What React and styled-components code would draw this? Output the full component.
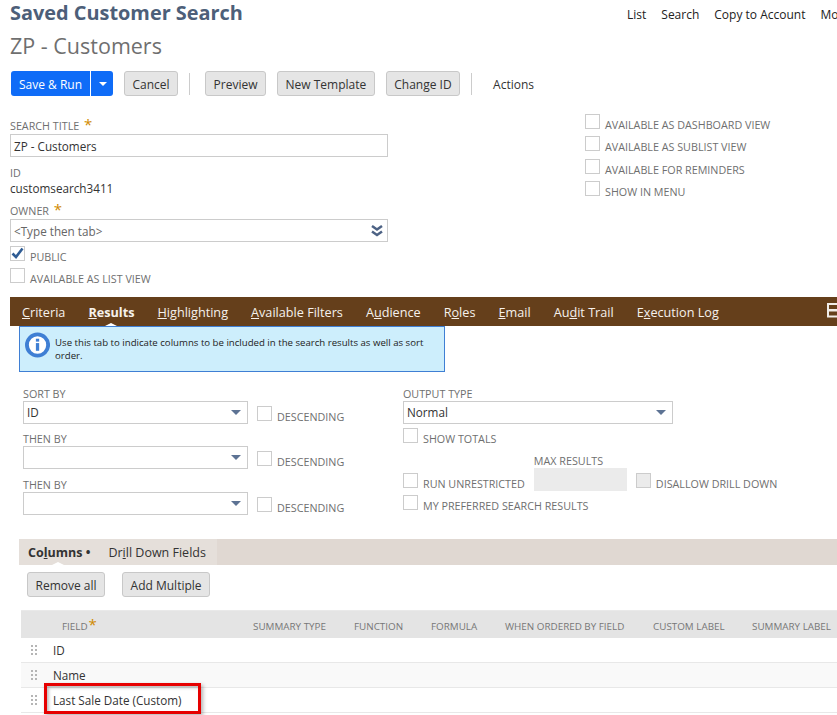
import React from "react";
import styled, { createGlobalStyle } from "styled-components";

const tabs = [
  ["C", "riteria"],
  ["R", "esults", true],
  ["H", "ighlighting"],
  ["A", "vailable Filters"],
  ["A", "udience", false, "u"],
  ["R", "oles", false, "o"],
  ["E", "mail"],
  ["A", "udit Trail", false, "d"],
  ["E", "xecution Log", false, "x"],
];

const columns = [
  ["SUMMARY TYPE", 101],
  ["FUNCTION", 77],
  ["FORMULA", 74],
  ["WHEN ORDERED BY FIELD", 148],
  ["CUSTOM LABEL", 99],
  ["SUMMARY LABEL", 100],
];

const rows = ["ID", "Name", "Last Sale Date (Custom)"];

function TabLabel({ first, rest, mark }) {
  if (!mark) {
    return (
      <>
        <u>{first}</u>
        {rest}
      </>
    );
  }
  const at = rest.indexOf(mark);
  return (
    <>
      {first}
      {rest.slice(0, at)}
      <u>{mark}</u>
      {rest.slice(at + 1)}
    </>
  );
}

function Check({ checked, disabled, label }) {
  return (
    <CheckRow>
      <CheckBox $disabled={disabled}>
        {checked && (
          <svg width="15" height="15" viewBox="0 0 15 15">
            <path d="M2.5 7.5 L6 11 L12.5 2.5" fill="none" stroke="#2f5c94" strokeWidth="2.6" />
          </svg>
        )}
      </CheckBox>
      <Label>{label}</Label>
    </CheckRow>
  );
}

function SelectField({ label, value, width }) {
  return (
    <Field>
      <Label>{label}</Label>
      <Select $width={width}>
        {value}
        <Caret />
      </Select>
    </Field>
  );
}

function SortRow({ label, value }) {
  return (
    <SortLine>
      <SelectField label={label} value={value} width={225} />
      <Check label="DESCENDING" />
    </SortLine>
  );
}

function Grip() {
  return (
    <svg width="6" height="10" viewBox="0 0 6 10">
      <g fill="#b5b5b5">
        <rect x="0" y="0" width="2" height="2" />
        <rect x="4" y="0" width="2" height="2" />
        <rect x="0" y="4" width="2" height="2" />
        <rect x="4" y="4" width="2" height="2" />
        <rect x="0" y="8" width="2" height="2" />
        <rect x="4" y="8" width="2" height="2" />
      </g>
    </svg>
  );
}

export default function App() {
  return (
    <>
      <GlobalStyle />
      <Page>
        <TitleRow>
          <Title>Saved Customer Search</Title>
          <TopNav>
            <span>List</span>
            <span>Search</span>
            <span>Copy to Account</span>
            <span>More</span>
          </TopNav>
        </TitleRow>
        <Subtitle>ZP - Customers</Subtitle>

        <Toolbar>
          <SplitButton>
            <SplitMain>Save &amp; Run</SplitMain>
            <SplitArrow />
          </SplitButton>
          <GrayButton>Cancel</GrayButton>
          <ToolbarDivider />
          <GrayButton>Preview</GrayButton>
          <GrayButton>New Template</GrayButton>
          <GrayButton>Change ID</GrayButton>
          <ToolbarDivider />
          <ActionsLink>Actions</ActionsLink>
        </Toolbar>

        <MainForm>
          <LeftColumn>
            <Field>
              <RequiredLabel>
                SEARCH TITLE <Star>*</Star>
              </RequiredLabel>
              <TextInput>ZP - Customers</TextInput>
            </Field>
            <IdField>
              <Label>ID</Label>
              <IdValue>customsearch3411</IdValue>
            </IdField>
            <Field>
              <RequiredLabel>
                OWNER <Star>*</Star>
              </RequiredLabel>
              <TextInput $muted>
                &lt;Type then tab&gt;
                <svg width="12" height="12" viewBox="0 0 12 12">
                  <path d="M1 1 L6 4.5 L11 1 M1 6.5 L6 10 L11 6.5" fill="none" stroke="#4d6284" strokeWidth="2.5" />
                </svg>
              </TextInput>
            </Field>
            <CheckStack>
              <Check checked label="PUBLIC" />
              <Check label="AVAILABLE AS LIST VIEW" />
            </CheckStack>
          </LeftColumn>
          <RightColumn>
            <Check label="AVAILABLE AS DASHBOARD VIEW" />
            <Check label="AVAILABLE AS SUBLIST VIEW" />
            <Check label="AVAILABLE FOR REMINDERS" />
            <Check label="SHOW IN MENU" />
          </RightColumn>
        </MainForm>

        <TabBar>
          {tabs.map(([first, rest, active, mark]) => (
            <Tab key={first + rest} $active={active}>
              <TabLabel first={first} rest={rest} mark={mark} />
            </Tab>
          ))}
          <TabMenu>
            <svg width="10" height="15" viewBox="0 0 10 15">
              <g fill="none" stroke="#f0ece8" strokeWidth="2">
                <rect x="1" y="1" width="14" height="6" />
                <rect x="1" y="7.5" width="14" height="6" />
              </g>
            </svg>
          </TabMenu>
        </TabBar>

        <InfoBox>
          <svg width="26" height="26" viewBox="0 0 26 26">
            <circle cx="13" cy="13" r="11" fill="#fff" stroke="#3f7fd4" strokeWidth="4" />
            <rect x="11.3" y="11" width="3.4" height="8" fill="#3f7fd4" />
            <rect x="11.3" y="6.5" width="3.4" height="3" fill="#3f7fd4" />
          </svg>
          <InfoText>
            Use this tab to indicate columns to be included in the search results as well as sort order.
          </InfoText>
        </InfoBox>

        <OptionsGrid>
          <SortColumn>
            <SortRow label="SORT BY" value="ID" />
            <SortRow label="THEN BY" />
            <SortRow label="THEN BY" />
          </SortColumn>
          <OutputColumn>
            <SelectField label="OUTPUT TYPE" value="Normal" width={270} />
            <ShowTotals>
              <Check label="SHOW TOTALS" />
            </ShowTotals>
            <RunLine>
              <Check label="RUN UNRESTRICTED" />
              <MaxResults>
                <Label>MAX RESULTS</Label>
                <MaxInput />
              </MaxResults>
              <Check disabled label="DISALLOW DRILL DOWN" />
            </RunLine>
            <Check label="MY PREFERRED SEARCH RESULTS" />
          </OutputColumn>
        </OptionsGrid>

        <SubTabs>
          <SubTabGroup>
            <SubTab $active>
              Co<u>l</u>umns <Dot>•</Dot>
            </SubTab>
            <SubTab>
              Dr<u>i</u>ll Down Fields
            </SubTab>
          </SubTabGroup>
        </SubTabs>

        <ListButtons>
          <GrayButton>Remove all</GrayButton>
          <GrayButton>Add Multiple</GrayButton>
        </ListButtons>

        <ColumnTable>
          <HeadRow>
            <FieldHead>
              FIELD<HeadStar>*</HeadStar>
            </FieldHead>
            {columns.map(([name, width]) => (
              <HeadCell key={name} $width={width}>
                {name}
              </HeadCell>
            ))}
          </HeadRow>
          {rows.map((name, i) => (
            <Row key={name} $odd={i % 2 === 1}>
              <GripCell>
                <Grip />
              </GripCell>
              {name}
              {i === 2 && <Highlight />}
            </Row>
          ))}
        </ColumnTable>
      </Page>
    </>
  );
}

const GlobalStyle = createGlobalStyle`
  html, body {
    margin: 0;
    padding: 0;
    background: #fff;
    overflow: hidden;
  }
  body {
    font-family: "Open Sans", "Liberation Sans", sans-serif;
    color: #333;
  }
  * {
    box-sizing: border-box;
  }
`;

const Page = styled.div`
  width: 837px;
  height: 715px;
  overflow: hidden;
`;

const TitleRow = styled.div`
  display: flex;
  justify-content: space-between;
  height: 26px;
  padding-left: 10px;
`;

const Title = styled.h1`
  margin: 0;
  font-size: 19.9px;
  line-height: 26px;
  font-weight: 700;
  color: #4d5f79;
  white-space: nowrap;
`;

const TopNav = styled.nav`
  display: flex;
  gap: 15px;
  width: 210px;
  flex: none;
  font-size: 12px;
  line-height: 16px;
  padding-top: 7px;
  color: #222;
  white-space: nowrap;
`;

const Subtitle = styled.h2`
  margin: 0;
  padding: 5px 0 0 10px;
  height: 45px;
  font-size: 21.5px;
  line-height: 30px;
  font-weight: 400;
  color: #6f6f6f;
`;

const Toolbar = styled.div`
  display: flex;
  align-items: center;
  height: 25px;
  padding-left: 11px;
  gap: 11px;
`;

const GrayButton = styled.button`
  height: 25px;
  padding: 1px 7.5px 0;
  border: 1px solid #c8c8c8;
  border-radius: 3px;
  background: #e5e5e5;
  color: #333;
  font-family: inherit;
  font-size: 12px;
  font-weight: 500;
  white-space: nowrap;
`;

const SplitButton = styled.div`
  display: flex;
  height: 25px;
`;

const SplitMain = styled.button`
  width: 79px;
  border: none;
  border-radius: 3px 0 0 3px;
  background: #0f6cf7;
  color: #fff;
  font-family: inherit;
  font-size: 12px;
  font-weight: 500;
  padding: 1px 0 0;
`;

const SplitArrow = styled.span`
  position: relative;
  width: 22px;
  margin-left: 1px;
  border-radius: 0 3px 3px 0;
  background: #0f6cf7;

  &::after {
    content: "";
    position: absolute;
    left: 8px;
    top: 11px;
    border-style: solid;
    border-width: 4px 4px 0;
    border-color: #fff transparent transparent;
  }
`;

const ToolbarDivider = styled.span`
  width: 1px;
  height: 22px;
  margin: 0 4px 0 0;
  background: #ccc;
`;

const ActionsLink = styled.span`
  margin-left: 6px;
  padding-top: 1px;
  font-size: 12px;
  font-weight: 500;
  color: #333;
`;

const MainForm = styled.div`
  display: flex;
  height: 201px;
  padding: 18px 0 0 10px;
`;

const LeftColumn = styled.div`
  width: 378px;
  padding-top: 5px;
`;

const RightColumn = styled.div`
  display: flex;
  flex-direction: column;
  gap: 5.4px;
  margin-left: 197px;
`;

const Field = styled.div`
  display: flex;
  flex-direction: column;
`;

const Label = styled.span`
  font-size: 10.75px;
  line-height: 14px;
  color: #6f6f6f;
  white-space: nowrap;
`;

const RequiredLabel = styled(Label)`
  height: 15px;
`;

const Star = styled.span`
  color: #d08a00;
  font-size: 15px;
  font-weight: 400;
  line-height: 10px;
  vertical-align: top;
  margin-left: 2px;
`;

const TextInput = styled.div`
  display: flex;
  align-items: center;
  justify-content: space-between;
  height: 23px;
  padding: 0 4px 0 3px;
  border: 1px solid #ccc;
  font-size: 11.7px;
  color: ${(p) => (p.$muted ? "#666" : "#333")};
`;

const IdField = styled(Field)`
  margin: 9px 0 8px;
`;

const IdValue = styled.span`
  font-size: 11.7px;
  line-height: 16px;
  color: #333;
`;

const CheckStack = styled.div`
  display: flex;
  flex-direction: column;
  gap: 5px;
  margin-top: 4px;
`;

const CheckRow = styled.label`
  display: flex;
  align-items: flex-start;
  gap: 5px;
  height: 17px;
`;

const CheckBox = styled.span`
  flex: none;
  width: 15px;
  height: 15px;
  border: 1px solid #ccc;
  background: ${(p) => (p.$disabled ? "#ebebeb" : "#fff")};
  line-height: 0;

  & + span {
    margin-top: 4px;
  }

  svg {
    margin: -1px;
  }
`;

const TabBar = styled.div`
  display: flex;
  align-items: flex-end;
  height: 29px;
  margin-left: 10px;
  padding-left: 12px;
  gap: 23px;
  background: #653f1b;
  position: relative;
`;

const Tab = styled.span`
  position: relative;
  padding-top: 2px;
  font-size: 12.67px;
  line-height: 27px;
  font-weight: ${(p) => (p.$active ? 700 : 400)};
  color: #f6f1ec;
  white-space: nowrap;

  &::after {
    content: "";
    display: ${(p) => (p.$active ? "block" : "none")};
    position: absolute;
    left: 50%;
    bottom: 0;
    margin-left: -6px;
    border-style: solid;
    border-width: 0 6px 3px;
    border-color: transparent transparent #fff;
  }
`;

const TabMenu = styled.span`
  position: absolute;
  right: 0;
  top: 6px;
  line-height: 0;
`;

const InfoBox = styled.div`
  display: flex;
  align-items: flex-start;
  gap: 5px;
  width: 426px;
  height: 46px;
  margin-left: 19px;
  padding: 5px 5px 0 5px;
  background: #cdeefc;
  border: 1px solid #3f7fd4;
`;

const InfoText = styled.p`
  margin: 4px 0 0;
  font-size: 9.65px;
  line-height: 13px;
  color: #222;
`;

const OptionsGrid = styled.div`
  display: flex;
  height: 167px;
  padding: 15px 0 0 23px;
`;

const SortColumn = styled.div`
  display: flex;
  flex-direction: column;
  gap: 8.3px;
  width: 380px;
`;

const SortLine = styled.div`
  display: flex;
  align-items: flex-end;
  gap: 9px;

  > label {
    margin-bottom: 1px;
  }
`;

const Select = styled.div`
  position: relative;
  display: flex;
  align-items: center;
  width: ${(p) => p.$width}px;
  height: 23px;
  padding: 0 0 2px 3px;
  border: 1px solid #ccc;
  font-size: 11.7px;
  color: #333;
`;

const Caret = styled.span`
  position: absolute;
  right: 6px;
  top: 8px;
  border-style: solid;
  border-width: 5px 5.5px 0;
  border-color: #5d7394 transparent transparent;
`;

const OutputColumn = styled.div`
  display: flex;
  flex-direction: column;
`;

const ShowTotals = styled.div`
  margin-top: 4px;
  height: 23px;
`;

const RunLine = styled.div`
  display: flex;
  align-items: flex-end;
  height: 40px;
  margin-bottom: 4px;
  gap: 9px;

  > label {
    margin-bottom: 1px;
  }
`;

const MaxResults = styled.div`
  display: flex;
  flex-direction: column;
`;

const MaxInput = styled.div`
  width: 93px;
  height: 23px;
  background: #ebebeb;
`;

const SubTabs = styled.div`
  height: 26px;
  margin-left: 19px;
  background: #e0d8d2;
`;

const SubTabGroup = styled.div`
  display: flex;
  width: 198px;
  height: 26px;
  padding-left: 9px;
  gap: 18px;
  background: #e5dfda;
`;

const SubTab = styled.span`
  position: relative;
  padding-top: 2px;
  font-size: 12.5px;
  line-height: 24px;
  font-weight: ${(p) => (p.$active ? 700 : 400)};
  color: #333;
  white-space: nowrap;

  &::after {
    content: "";
    display: ${(p) => (p.$active ? "block" : "none")};
    position: absolute;
    left: 24px;
    bottom: 0;
    border-style: solid;
    border-width: 0 6px 3px;
    border-color: transparent transparent #fff;
  }
`;

const Dot = styled.span`
  font-weight: 700;
`;

const ListButtons = styled.div`
  display: flex;
  gap: 17px;
  height: 45px;
  padding: 7px 0 0 27px;
`;

const ColumnTable = styled.div`
  margin-left: 21px;
`;

const HeadRow = styled.div`
  display: flex;
  align-items: center;
  height: 28px;
  padding-top: 3px;
  background: #e4e4e4;
  border-top: 1px solid #e9e9e9;
`;

const FieldHead = styled.div`
  width: 232px;
  flex: none;
  padding-left: 41px;
  font-size: 9.85px;
  color: #777;
`;

const HeadStar = styled.span`
  color: #d08a00;
  font-size: 15px;
  line-height: 10px;
  margin-left: 1px;
`;

const HeadCell = styled.div`
  width: ${(p) => p.$width}px;
  flex: none;
  font-size: 9.85px;
  color: #777;
  white-space: nowrap;
`;

const Row = styled.div`
  position: relative;
  display: flex;
  align-items: center;
  height: 25px;
  padding-bottom: 1px;
  background: ${(p) => (p.$odd ? "#f9f9f9" : "#fff")};
  border-bottom: 1px solid #e8e8e8;
  font-size: 11.7px;
  color: #333;
`;

const GripCell = styled.div`
  display: flex;
  width: 32px;
  padding-left: 10px;
  line-height: 0;
`;

const Highlight = styled.span`
  position: absolute;
  left: 23px;
  top: -5px;
  width: 157px;
  height: 31px;
  border: 3px solid #e60000;
  box-shadow: 2px 2px 4px rgba(0, 0, 0, 0.3), inset 2px 2px 3px rgba(0, 0, 0, 0.25);
`;
